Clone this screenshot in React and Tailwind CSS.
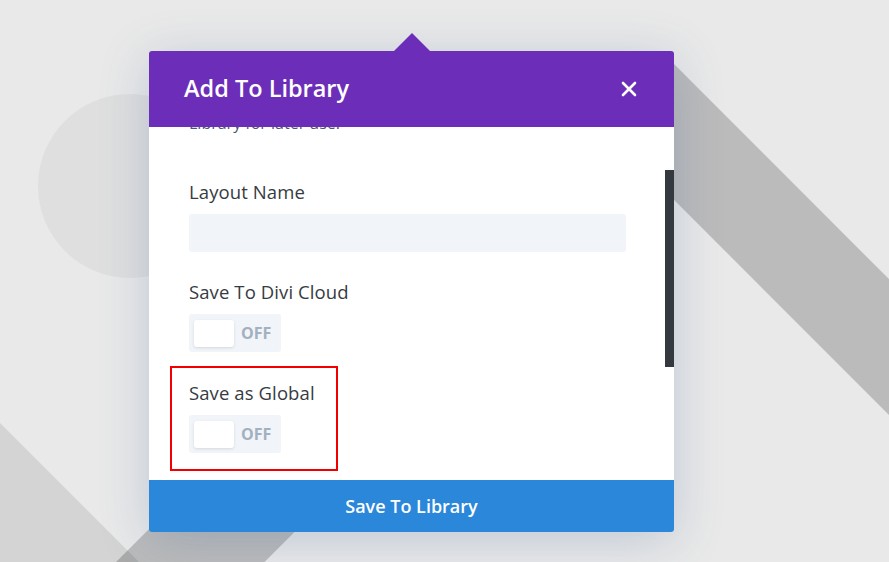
import React from "react";

const font = { fontFamily: '"Open Sans", "Liberation Sans", sans-serif' };

const Backdrop = () => (
  <svg className="absolute inset-0" width="889" height="562" viewBox="0 0 889 562">
    <circle cx="130" cy="186" r="92" fill="#dfdfdf" />
    {/* band going down-left, under the modal */}
    <rect x="0" y="-52" width="700" height="105" rx="14" fill="#bbbbbb" transform="translate(470 283) rotate(135)" />
    {/* band top right */}
    <rect x="0" y="-48" width="1000" height="96" rx="16" fill="#bbbbbb" transform="translate(621 79) rotate(45)" />
    {/* light band bottom left */}
    <rect x="0" y="0" width="900" height="200" fill="#000" fillOpacity="0.09" transform="translate(-300 123) rotate(45)" />
  </svg>
);

const Toggle = () => (
  <div className="flex items-center w-[92px] h-[38px] bg-[#f1f5f9] rounded-[3px] pl-[5px]">
    <div className="w-[40px] h-[27px] bg-white rounded-[3px] shadow-[0_1px_3px_rgba(0,0,0,0.12)]"></div>
    <span className="ml-[7px] text-[16px] font-bold text-[#a3b0c0] leading-none">OFF</span>
  </div>
);

const Label = ({ children }) => (
  <div className="text-[18.5px] leading-[24px] tracking-[0.1px] text-[#363b41] mb-[10px]">{children}</div>
);

export default function App() {
  return (
    <div className="relative w-[889px] h-[562px] bg-[#e9e9e9] overflow-hidden" style={font}>
      <Backdrop />

      <div className="relative ml-[149px] top-[51px] w-[525px] shadow-[0_8px_50px_rgba(60,95,150,0.24)] rounded-[3px]">
        {/* pointer */}
        <div className="absolute left-[245px] -top-[18px] w-0 h-0 border-l-[18px] border-r-[18px] border-b-[18px] border-l-transparent border-r-transparent border-b-[#6c2eb9]"></div>

        {/* header */}
        <div className="h-[76px] bg-[#6c2eb9] rounded-t-[3px] flex items-center justify-between pl-[35px] pr-[37px]">
          <h2 className="text-white text-[23.5px] font-semibold leading-none">Add To Library</h2>
          <svg width="16" height="16" viewBox="0 0 16 16">
            <path d="M2 2 L14 14 M14 2 L2 14" stroke="#fff" strokeWidth="2.6" strokeLinecap="round" />
          </svg>
        </div>

        {/* body */}
        <div className="relative h-[353px] bg-white overflow-hidden">
          <div className="absolute right-0 top-[43px] w-[9px] h-[197px] bg-[#33393e]"></div>

          <div className="-mt-[43px] pl-[40px] pr-[48px]">
            <p className="text-[16px] leading-[26px] text-[#4c5866]">
              Save your current page to the Divi<br />Library for later use.
            </p>

            <div className="mt-[44px]">
              <Label>Layout Name</Label>
              <div className="h-[38px] bg-[#f1f5f9] rounded-[3px]"></div>
            </div>

            <div className="mt-[28px]">
              <Label>Save To Divi Cloud</Label>
              <Toggle />
            </div>

            <div className="relative mt-[29px]">
              <Label>Save as Global</Label>
              <Toggle />
              <div className="absolute -left-[19px] -top-[15px] w-[168px] h-[105px] border-[2.5px] border-[#f20000]"></div>
            </div>
          </div>
        </div>

        {/* footer */}
        <div className="h-[52px] bg-[#2b87da] rounded-b-[3px] flex items-center justify-center">
          <span className="text-white text-[18px] font-semibold">Save To Library</span>
        </div>
      </div>
    </div>
  );
}
